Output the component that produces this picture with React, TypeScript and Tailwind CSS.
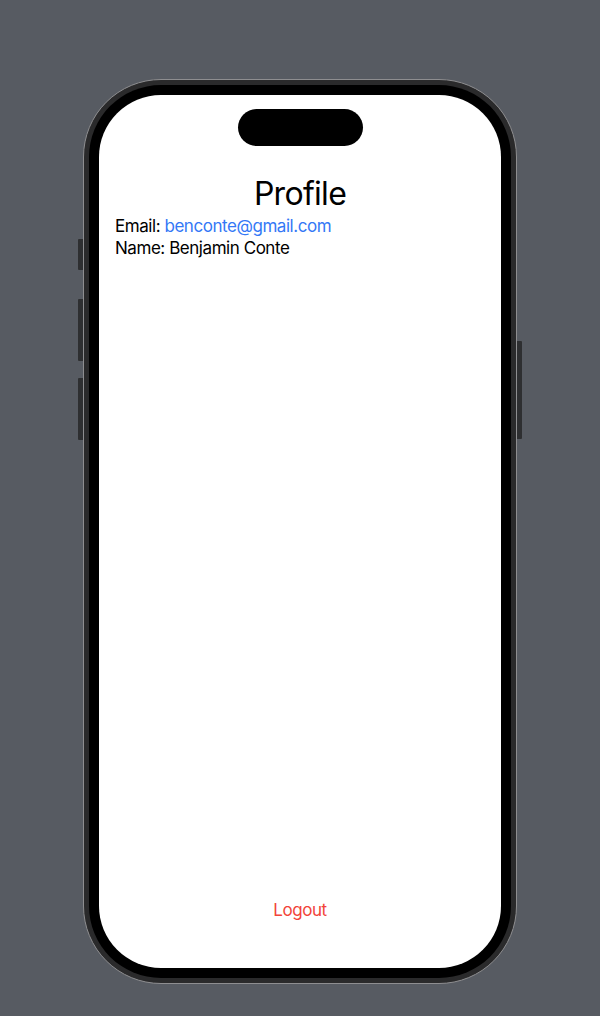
import React from "react";

export default function App() {
  return (
    <div
      className="w-full h-[1016px] bg-[#575b62] flex justify-center pt-[79px] overflow-hidden"
      style={{ fontFamily: "Inter, 'Noto Sans', sans-serif" }}
    >
      <div className="relative w-[434px] h-[905px]">
        {/* side buttons */}
        <div className="absolute left-[-5px] top-[160px] w-[5px] h-[31px] bg-[#2e2f31] rounded-l-[1px]" />
        <div className="absolute left-[-5px] top-[220px] w-[5px] h-[62px] bg-[#2e2f31] rounded-l-[1px]" />
        <div className="absolute left-[-5px] top-[299px] w-[5px] h-[62px] bg-[#2e2f31] rounded-l-[1px]" />
        <div className="absolute right-[-5px] top-[262px] w-[5px] h-[98px] bg-[#2e2f31] rounded-r-[1px]" />
        <div className="w-full h-full rounded-[78px] border border-[#8e8e90] bg-[#2a2a2b] p-[5px]">
          <div className="w-full h-full rounded-[72px] bg-black p-[10px]">
            <div className="w-full h-full rounded-[62px] bg-white flex flex-col overflow-hidden">
              <div className="mt-[14px] mx-auto w-[125px] h-[37px] rounded-full bg-black shrink-0" />
              <div className="mt-[29px] text-center text-[32px] leading-[38px] tracking-[-0.7px] text-black">Profile</div>
              <div className="mt-[2px] px-[16px] text-[17px] leading-[22px] tracking-[-0.45px] text-black">
                <div>
                  Email: <span className="text-[#3478f6]">benconte@gmail.com</span>
                </div>
                <div>Name: Benjamin Conte</div>
              </div>
              <div className="flex-1" />
              <div className="mb-[47px] text-center text-[17px] leading-[22px] tracking-[-0.45px] text-[#f2443a]">Logout</div>
            </div>
          </div>
        </div>
      </div>
    </div>
  );
}
